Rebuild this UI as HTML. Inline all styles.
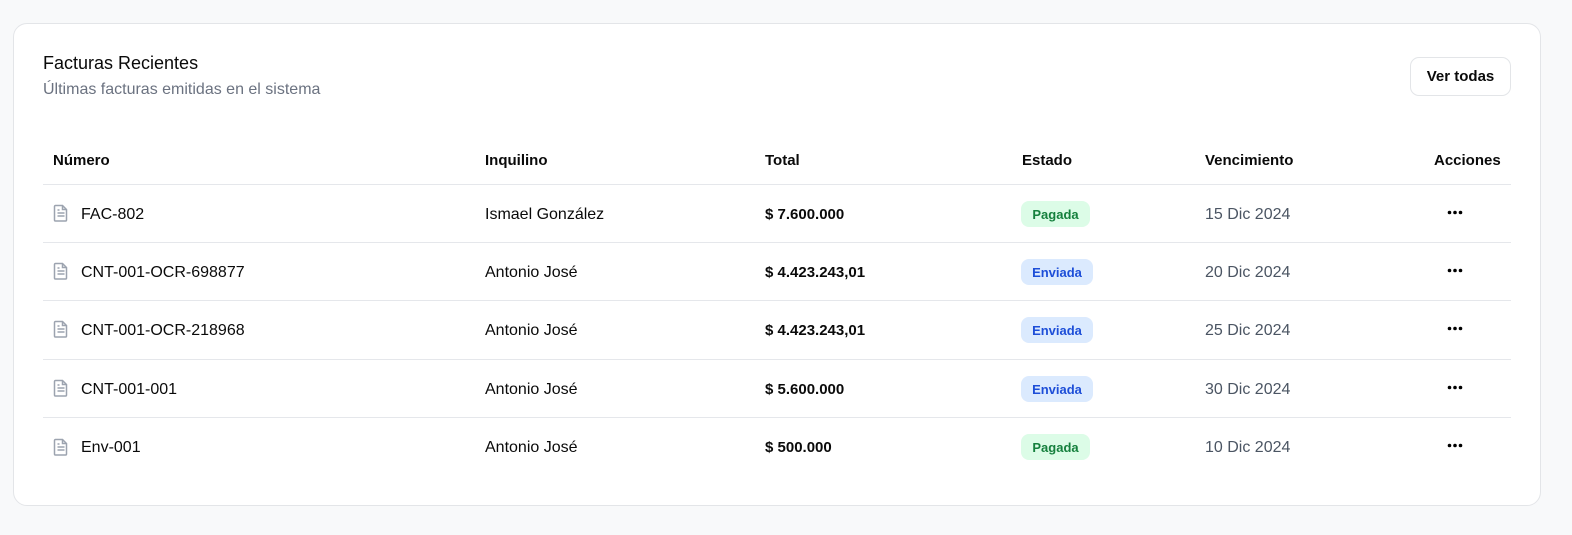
<!DOCTYPE html>
<html><head><meta charset="utf-8"><style>
*{box-sizing:border-box;margin:0;padding:0}
body{width:1572px;height:535px;background:#f8f9fa;font-family:"Liberation Sans",sans-serif;color:#0a0a0a;position:relative;overflow:hidden}
.card{position:absolute;left:13px;top:23px;width:1528px;height:483px;background:#fff;border:1px solid #e3e5e8;border-radius:14px}
.t{position:absolute;left:43px;top:53px;font-size:18px}
.s{position:absolute;left:43px;top:81px;font-size:16px;color:#6b7280}
.btn{position:absolute;left:1410px;top:57px;width:101px;height:39px;border:1px solid #e3e5e8;border-radius:9px;font-size:15px;font-weight:bold;display:flex;align-items:center;justify-content:center}
.h{position:absolute;top:152px;font-size:15px;font-weight:bold}
.line{position:absolute;left:43px;width:1468px;height:1px;background:#e5e7eb}
.c{position:absolute;font-size:16px;line-height:20px}
.b{font-weight:bold;font-size:15px}
.g{color:#4b5563}
.badge{position:absolute;height:26px;border-radius:8px;font-size:13px;font-weight:bold;display:flex;align-items:center;justify-content:center}
.p{background:#dcfce7;color:#15803d;width:69px}
.e{background:#dbeafe;color:#1d4ed8;width:72px}
.ic{position:absolute;left:53px}
.dots{position:absolute;left:1447px}
</style></head><body>
<div class="card"></div>
<div class="t">Facturas Recientes</div>
<div class="s">Últimas facturas emitidas en el sistema</div>
<div class="btn">Ver todas</div>
<div class="h" style="left:53px">Número</div>
<div class="h" style="left:485px">Inquilino</div>
<div class="h" style="left:765px">Total</div>
<div class="h" style="left:1022px">Estado</div>
<div class="h" style="left:1205px">Vencimiento</div>
<div class="h" style="left:1434px">Acciones</div>
<div class="line" style="top:184px"></div>
<div class="line" style="top:242px"></div>
<div class="line" style="top:300px"></div>
<div class="line" style="top:359px"></div>
<div class="line" style="top:417px"></div>

<svg class="ic" style="top:204px" width="16" height="18" viewBox="0 0 16 18" fill="none" stroke="#9ca3af" stroke-width="1.5"><path d="M2.5 1.5h7l4 4v10.5a1 1 0 0 1-1 1h-10a1 1 0 0 1-1-1v-13.5a1 1 0 0 1 1-1z"/><path d="M9.5 1.5v4h4M4.5 9h7M4.5 12h7M4.5 6h2"/></svg>
<div class="c" style="left:81px;top:205px">FAC-802</div>
<div class="c" style="left:485px;top:205px">Ismael González</div>
<div class="c b" style="left:765px;top:205px">$ 7.600.000</div>
<div class="badge p" style="left:1021px;top:201px">Pagada</div>
<div class="c g" style="left:1205px;top:205px">15 Dic 2024</div>
<svg class="dots" style="top:210px" width="16" height="5"><circle cx="2.5" cy="2.5" r="1.8"/><circle cx="8" cy="2.5" r="1.8"/><circle cx="13.5" cy="2.5" r="1.8"/></svg>

<svg class="ic" style="top:262px" width="16" height="18" viewBox="0 0 16 18" fill="none" stroke="#9ca3af" stroke-width="1.5"><path d="M2.5 1.5h7l4 4v10.5a1 1 0 0 1-1 1h-10a1 1 0 0 1-1-1v-13.5a1 1 0 0 1 1-1z"/><path d="M9.5 1.5v4h4M4.5 9h7M4.5 12h7M4.5 6h2"/></svg>
<div class="c" style="left:81px;top:263px">CNT-001-OCR-698877</div>
<div class="c" style="left:485px;top:263px">Antonio José</div>
<div class="c b" style="left:765px;top:263px">$ 4.423.243,01</div>
<div class="badge e" style="left:1021px;top:259px">Enviada</div>
<div class="c g" style="left:1205px;top:263px">20 Dic 2024</div>
<svg class="dots" style="top:268px" width="16" height="5"><circle cx="2.5" cy="2.5" r="1.8"/><circle cx="8" cy="2.5" r="1.8"/><circle cx="13.5" cy="2.5" r="1.8"/></svg>

<svg class="ic" style="top:320px" width="16" height="18" viewBox="0 0 16 18" fill="none" stroke="#9ca3af" stroke-width="1.5"><path d="M2.5 1.5h7l4 4v10.5a1 1 0 0 1-1 1h-10a1 1 0 0 1-1-1v-13.5a1 1 0 0 1 1-1z"/><path d="M9.5 1.5v4h4M4.5 9h7M4.5 12h7M4.5 6h2"/></svg>
<div class="c" style="left:81px;top:321px">CNT-001-OCR-218968</div>
<div class="c" style="left:485px;top:321px">Antonio José</div>
<div class="c b" style="left:765px;top:321px">$ 4.423.243,01</div>
<div class="badge e" style="left:1021px;top:317px">Enviada</div>
<div class="c g" style="left:1205px;top:321px">25 Dic 2024</div>
<svg class="dots" style="top:326px" width="16" height="5"><circle cx="2.5" cy="2.5" r="1.8"/><circle cx="8" cy="2.5" r="1.8"/><circle cx="13.5" cy="2.5" r="1.8"/></svg>

<svg class="ic" style="top:379px" width="16" height="18" viewBox="0 0 16 18" fill="none" stroke="#9ca3af" stroke-width="1.5"><path d="M2.5 1.5h7l4 4v10.5a1 1 0 0 1-1 1h-10a1 1 0 0 1-1-1v-13.5a1 1 0 0 1 1-1z"/><path d="M9.5 1.5v4h4M4.5 9h7M4.5 12h7M4.5 6h2"/></svg>
<div class="c" style="left:81px;top:380px">CNT-001-001</div>
<div class="c" style="left:485px;top:380px">Antonio José</div>
<div class="c b" style="left:765px;top:380px">$ 5.600.000</div>
<div class="badge e" style="left:1021px;top:376px">Enviada</div>
<div class="c g" style="left:1205px;top:380px">30 Dic 2024</div>
<svg class="dots" style="top:385px" width="16" height="5"><circle cx="2.5" cy="2.5" r="1.8"/><circle cx="8" cy="2.5" r="1.8"/><circle cx="13.5" cy="2.5" r="1.8"/></svg>

<svg class="ic" style="top:438px" width="16" height="18" viewBox="0 0 16 18" fill="none" stroke="#9ca3af" stroke-width="1.5"><path d="M2.5 1.5h7l4 4v10.5a1 1 0 0 1-1 1h-10a1 1 0 0 1-1-1v-13.5a1 1 0 0 1 1-1z"/><path d="M9.5 1.5v4h4M4.5 9h7M4.5 12h7M4.5 6h2"/></svg>
<div class="c" style="left:81px;top:438px">Env-001</div>
<div class="c" style="left:485px;top:438px">Antonio José</div>
<div class="c b" style="left:765px;top:438px">$ 500.000</div>
<div class="badge p" style="left:1021px;top:434px">Pagada</div>
<div class="c g" style="left:1205px;top:438px">10 Dic 2024</div>
<svg class="dots" style="top:443px" width="16" height="5"><circle cx="2.5" cy="2.5" r="1.8"/><circle cx="8" cy="2.5" r="1.8"/><circle cx="13.5" cy="2.5" r="1.8"/></svg>
</body></html>
